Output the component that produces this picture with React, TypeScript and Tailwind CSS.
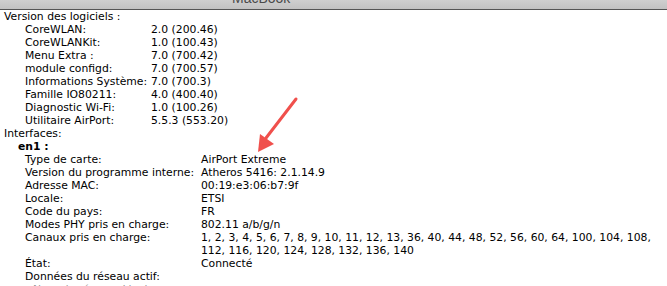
const versions: [string, string][] = [
  ["CoreWLAN:", "2.0 (200.46)"],
  ["CoreWLANKit:", "1.0 (100.43)"],
  ["Menu Extra :", "7.0 (700.42)"],
  ["module configd:", "7.0 (700.57)"],
  ["Informations Système:", "7.0 (700.3)"],
  ["Famille IO80211:", "4.0 (400.40)"],
  ["Diagnostic Wi-Fi:", "1.0 (100.26)"],
  ["Utilitaire AirPort:", "5.5.3 (553.20)"],
];

const iface: [string, string][] = [
  ["Type de carte:", "AirPort Extreme"],
  ["Version du programme interne:", "Atheros 5416: 2.1.14.9"],
  ["Adresse MAC:", "00:19:e3:06:b7:9f"],
  ["Locale:", "ETSI"],
  ["Code du pays:", "FR"],
  ["Modes PHY pris en charge:", "802.11 a/b/g/n"],
];

export default function App() {
  return (
    <div
      className="h-[286px] w-[667px] overflow-hidden bg-white text-[10.8px] leading-[13px] text-black antialiased"
      style={{ fontFamily: '"DejaVu Sans", "Liberation Sans", sans-serif' }}
    >
      <div className="relative h-[10px] overflow-hidden border-b border-[#555] bg-gradient-to-b from-[#cfcfcf] to-[#c2c2c2]">
        <div
          className="absolute left-[232px] top-[-9px] text-[14px] leading-[14px] text-[#4a4a4a]"
          style={{ fontFamily: '"Liberation Sans", sans-serif' }}
        >
          MacBook
        </div>
      </div>

      <div className="relative pl-1">
        <div>Version des logiciels :</div>
        {versions.map(([k, v]) => (
          <div key={k} className="flex pl-[21px]">
            <span className="w-[126px] shrink-0">{k}</span>
            <span>{v}</span>
          </div>
        ))}
        <div>Interfaces:</div>
        <div className="pl-[14px] font-bold">en1 :</div>
        {iface.map(([k, v]) => (
          <div key={k} className="flex pl-[21px]">
            <span className="w-[176px] shrink-0">{k}</span>
            <span>{v}</span>
          </div>
        ))}
        <div className="flex pl-[21px]">
          <span className="w-[176px] shrink-0">Canaux pris en charge:</span>
          <span>
            1, 2, 3, 4, 5, 6, 7, 8, 9, 10, 11, 12, 13, 36, 40, 44, 48, 52, 56, 60, 64, 100, 104, 108,
            <br />
            112, 116, 120, 124, 128, 132, 136, 140
          </span>
        </div>
        <div className="flex pl-[21px]">
          <span className="w-[176px] shrink-0">État:</span>
          <span>Connecté</span>
        </div>
        <div className="pl-[21px]">Données du réseau actif:</div>
        <div className="pl-[29px] text-[#999]">Nom du réseau: Livebox</div>

        <svg className="absolute left-[252px] top-[86px]" width="52" height="58" viewBox="0 0 52 58">
          <line x1="44" y1="3" x2="14" y2="42" stroke="#f0504c" strokeWidth="3" strokeLinecap="round" />
          <polygon points="6,56 8,38 22,48" fill="#f0504c" />
        </svg>
      </div>
    </div>
  );
}
